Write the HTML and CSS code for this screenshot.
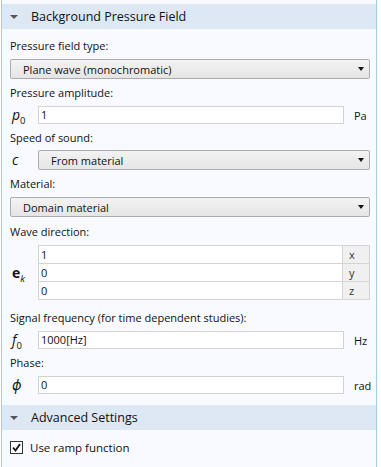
FILE: index.html
```html
<!DOCTYPE html>
<html lang="en">
<head>
    <meta charset="UTF-8">
    <title>Background Pressure Field</title>
    <link rel="stylesheet" href="styles.css">
</head>
<body>
    <div class="panel">
        <div class="section-head"><span class="caret"></span>Background Pressure Field</div>
        <div class="section-body">
            <div class="label">Pressure field type:</div>
            <div class="select">Plane wave (monochromatic)<span class="arrow"></span></div>

            <div class="label">Pressure amplitude:</div>
            <div class="row">
                <span class="sym"><i>p</i><sub>0</sub></span>
                <div class="input">1</div>
                <span class="unit">Pa</span>
            </div>

            <div class="label">Speed of sound:</div>
            <div class="row spaced">
                <span class="sym"><i>c</i></span>
                <div class="select grow">From material<span class="arrow"></span></div>
            </div>

            <div class="label">Material:</div>
            <div class="select spaced">Domain material<span class="arrow"></span></div>

            <div class="label">Wave direction:</div>
            <div class="row table-row">
                <span class="sym"><b>e</b><sub><i>k</i></sub></span>
                <table class="vector">
                    <tr><td>1</td><td class="axis">x</td></tr>
                    <tr><td>0</td><td class="axis">y</td></tr>
                    <tr><td>0</td><td class="axis">z</td></tr>
                </table>
            </div>

            <div class="label">Signal frequency (for time dependent studies):</div>
            <div class="row">
                <span class="sym"><i>f</i><sub>0</sub></span>
                <div class="input">1000[Hz]</div>
                <span class="unit">Hz</span>
            </div>

            <div class="label">Phase:</div>
            <div class="row">
                <span class="sym"><i>ϕ</i></span>
                <div class="input">0</div>
                <span class="unit">rad</span>
            </div>
        </div>

        <div class="section-head"><span class="caret"></span>Advanced Settings</div>
        <div class="section-body">
            <label class="check">
                <span class="box">
                    <svg width="11" height="11" viewBox="0 0 11 11"><path d="M2 5.5 L4.5 8.5 L9 2" fill="none" stroke="#111" stroke-width="1.8"/></svg>
                </span>
                Use ramp function
            </label>
        </div>
    </div>
</body>
</html>
```

FILE: styles.css
```css
body {
    margin: 0;
    background: #ffffff;
    font-family: "Open Sans", "Noto Sans", sans-serif;
    font-size: 11px;
    color: #111;
}
.panel {
    margin-left: 1px;
    width: 374px;
    height: 463px;
    background: #f8faff;
    border-left: 1px solid #9fcdf3;
    border-right: 1px solid #9fcdf3;
    padding-top: 4px;
}
.section-head {
    height: 25px;
    background: #dee8f4;
    display: flex;
    align-items: center;
    font-size: 12.5px;
    color: #111;
}
.caret {
    width: 0;
    height: 0;
    border-left: 4px solid transparent;
    border-right: 4px solid transparent;
    border-top: 4px solid #555;
    margin-left: 8px;
    margin-right: 13px;
}
.section-body {
    padding: 9px 6px 5px 8px;
}
.label {
    height: 16px;
    line-height: 16px;
    margin-bottom: 5px;
}
.select {
    height: 18px;
    border: 1px solid #acacac;
    border-radius: 2px;
    background: linear-gradient(#f3f3f3, #e5e5e5);
    display: flex;
    align-items: center;
    padding-left: 12px;
    margin-bottom: 6px;
    position: relative;
}
.grow {
    flex: 1;
    margin-bottom: 0;
}
.arrow {
    position: absolute;
    right: 5px;
    top: 7px;
    border-left: 3px solid transparent;
    border-right: 3px solid transparent;
    border-top: 4px solid #111;
}
.row {
    display: flex;
    align-items: center;
    height: 18px;
    margin-bottom: 6px;
}
.row.spaced,
.select.spaced {
    margin-bottom: 7px;
}
.table-row {
    height: auto;
    margin-bottom: 10px;
}
.sym {
    width: 28px;
    padding-left: 2px;
    box-sizing: border-box;
    font-size: 14px;
    line-height: 18px;
    white-space: nowrap;
}
.sym sub {
    font-size: 9.5px;
    line-height: 0;
}
.input {
    flex: 1;
    height: 16px;
    border: 1px solid #d2d2d2;
    background: #ffffff;
    line-height: 16px;
    padding-left: 2px;
}
.unit {
    width: 26px;
    padding-left: 10px;
    box-sizing: border-box;
    white-space: nowrap;
}
.vector {
    flex: 1;
    border-collapse: collapse;
    border: 1px solid #c6c6c6;
}
.vector td {
    height: 17px;
    padding: 0 0 0 2px;
    border: 1px solid #d4d4d4;
    background: #ffffff;
    line-height: 17px;
}
.vector td.axis {
    width: 20px;
    background: #f0f0f0;
    color: #333;
    padding-left: 6px;
}
.check {
    display: flex;
    align-items: center;
    gap: 7px;
    height: 16px;
    font-size: 11.5px;
}
.box {
    width: 11px;
    height: 11px;
    border: 1px solid #333;
    background: #fff;
    display: flex;
}
```
